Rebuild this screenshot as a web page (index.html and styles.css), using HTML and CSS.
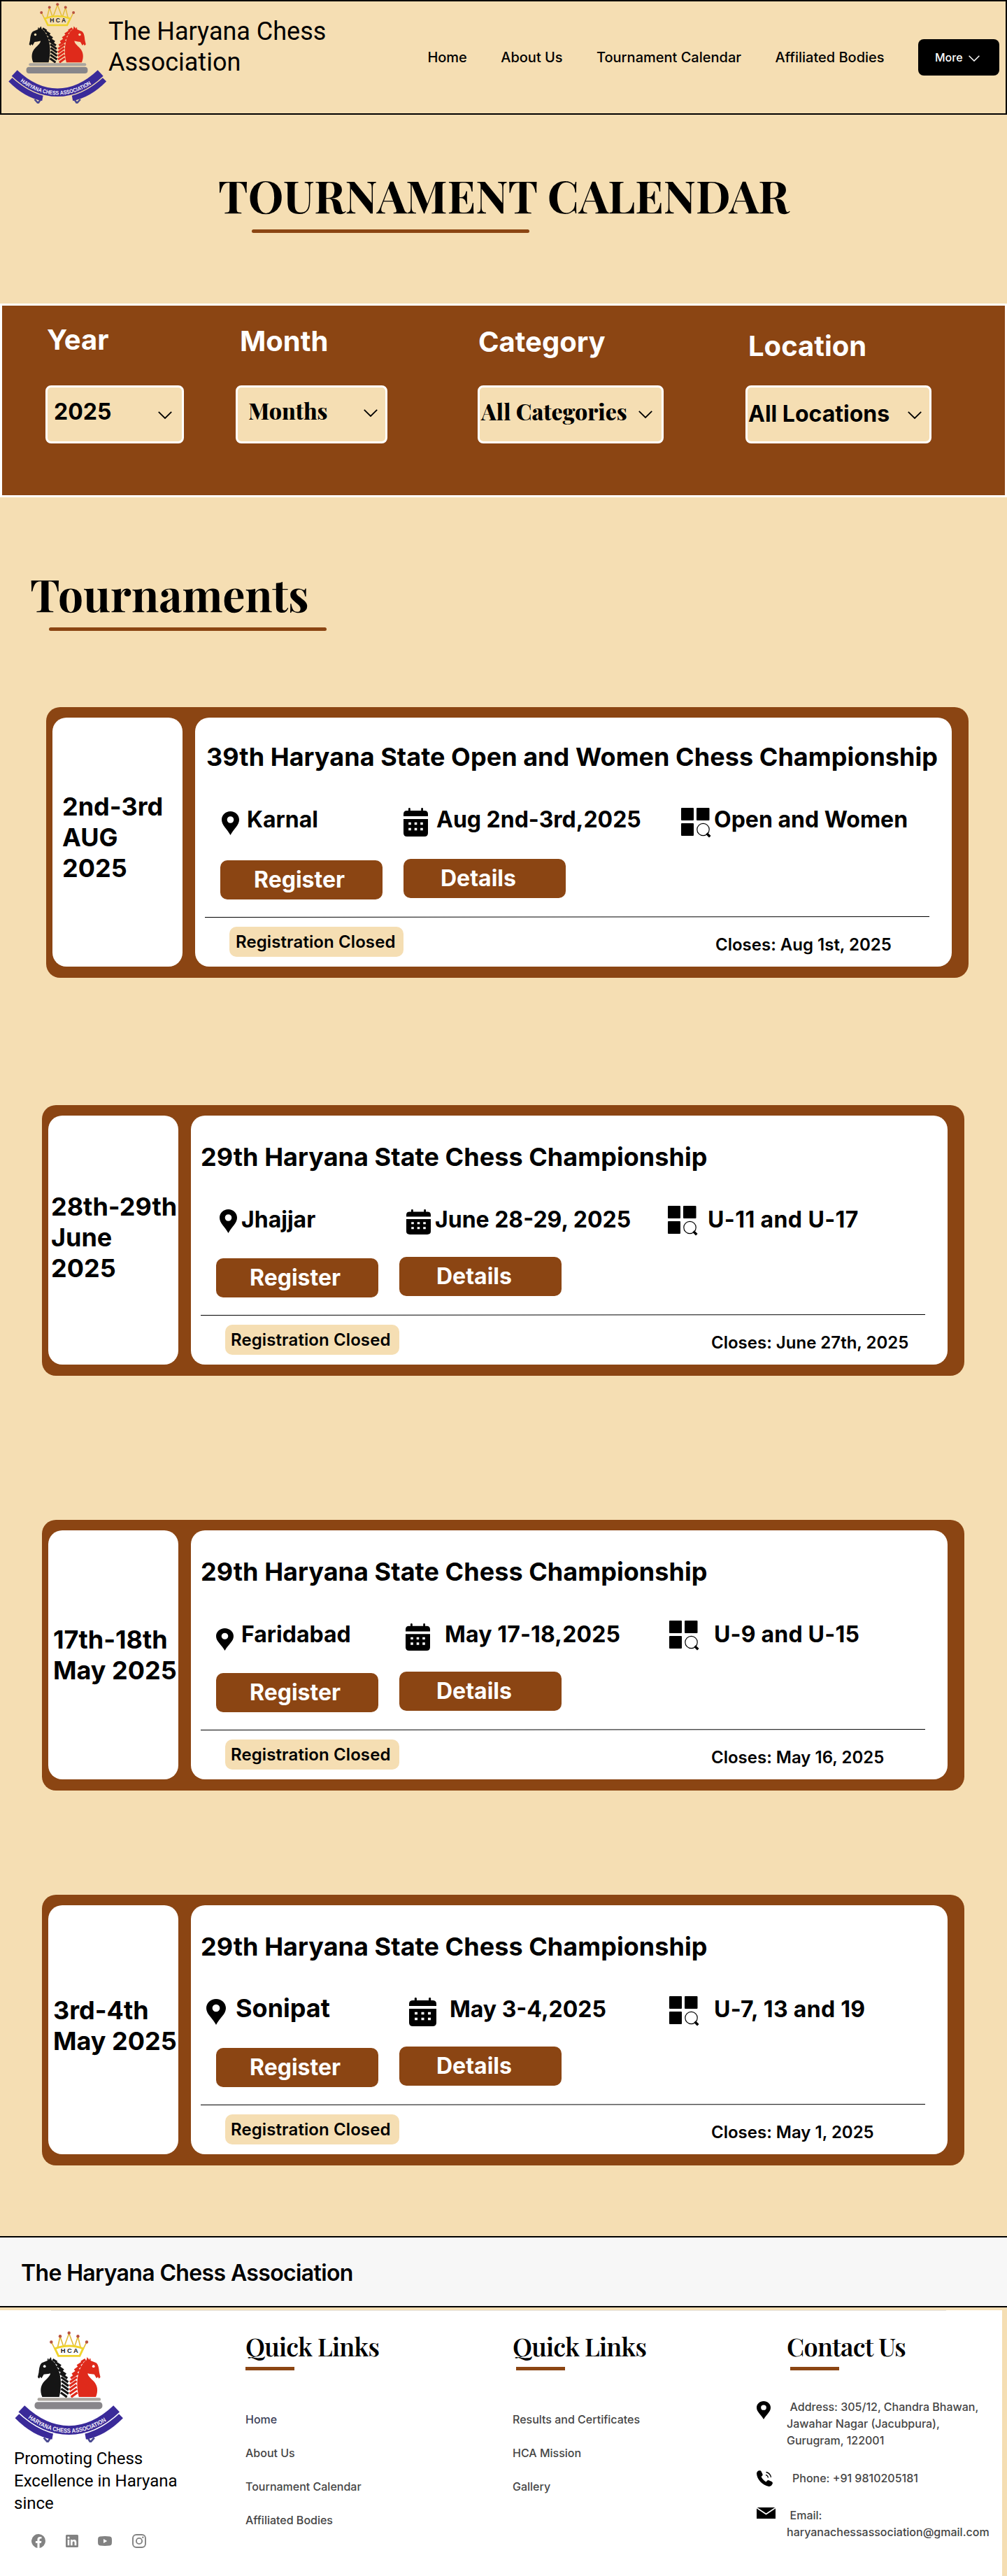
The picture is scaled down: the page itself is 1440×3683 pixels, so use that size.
FILE: index.html
```html
<!DOCTYPE html>
<html lang="en">
<head>
<meta charset="utf-8">
<title>The Haryana Chess Association - Tournament Calendar</title>
<link rel="stylesheet" href="styles.css">
</head>
<body>
<svg class="sprite" width="0" height="0" aria-hidden="true">
  <defs>
    <path id="ribbon-text-path" d="M17 112.500Q42 131.500 70.200 131.500T124 112.500"/>
    <g id="knight">
      <path d="M46.800 33.500L47.600 37.500C51 39 53.500 43.500 56 49C60 58 61 72 57.500 85.200H35.500C32 77 33.500 69.500 38.500 64.500C42.500 60.500 46 57.500 46 54.500C42.500 55.500 39.500 55.500 37.500 56L34.600 61L32.800 59L31.500 61.300L29.600 59.500L31 53.500C31.500 49 31.800 44 35 41L43.500 37.500Z"/>
      <path d="M49 36.500l5.500 3.500M52 40l7.500 5M54.500 44.500l8.500 6M56.500 49.500l9.500 6.500M58.500 54.500l9.500 6.500M60 59.500l9 6.500M60.500 64.500l9 6.500M60.500 69.500l9 6.500M60 74.500l9.500 6.500M59.500 79.500l8 5.700" fill="none" stroke="currentColor" stroke-width="2.900"/>
      <path d="M43 39.500v-4" stroke="currentColor" stroke-width="1.500"/>
      <circle class="logo-gap-fill" cx="38.500" cy="45.500" r="1.700"/>
    </g>
    <symbol id="logo" viewBox="0 0 140 144">
      <path d="M47.200 14L54 27L58.700 7L63.500 21L70.200 3L77 21L81.700 7L86.500 27L93.100 14" fill="none" stroke="#e3bd3c" stroke-width="1.500"/>
      <path class="logo-gap-fill" d="M52 22.500Q70.200 15.500 88.400 22.500L84 32H56.500Z" stroke="#f0d32c" stroke-width="2.600"/>
      <g fill="#b9523f"><circle cx="47.200" cy="14" r="2"/><circle cx="58.700" cy="6.500" r="2"/><circle cx="70.200" cy="2.300" r="2"/><circle cx="81.700" cy="6.500" r="2"/><circle cx="93.100" cy="14" r="2"/></g>
      <text class="logo-initials" x="70.700" y="28.200" text-anchor="middle">H C A</text>
      <use href="#knight" class="knight-black"/>
      <use href="#knight" class="knight-red" transform="translate(140.400 0) scale(-1 1)"/>
      <rect x="29.300" y="86.200" width="82" height="4" rx="2" fill="#aaa59e"/>
      <rect x="25.600" y="91.700" width="87.800" height="9.200" rx="4" fill="#88868a"/>
      <path d="M37.500 138l5 5.500l4-6M93.900 137.500l4 6l5-5.500" fill="none" stroke="#4a4a90" stroke-width="2.600"/>
      <g fill="none">
        <path d="M3.300 109.500Q25 131.500 49 136M137.100 109.500Q115.400 131.500 91.400 136" stroke="#3a2a99" stroke-width="8.500"/>
        <path class="logo-gap-stroke" d="M7 99.500Q38 128.800 70.200 128.800T133.400 99.500" stroke-width="13.500"/>
        <path d="M8.700 100.500Q38 128.300 70.200 128.300T131.700 100.500" stroke="#3a2a99" stroke-width="11.500"/>
      </g>
      <text class="logo-ribbon"><textPath href="#ribbon-text-path" textLength="109" lengthAdjust="spacingAndGlyphs">HARYANA CHESS ASSOCIATION</textPath></text>
    </symbol>
    <symbol id="chevron" viewBox="0 0 20 11"><path d="M.8.900L10 10L19.200.900" fill="none" stroke="currentColor" stroke-width="1.800"/></symbol>
    <symbol id="pin" viewBox="0 0 25 34" preserveAspectRatio="none"><path fill-rule="evenodd" d="M12.500 0C5.600 0 0 5.300 0 12C0 20 7.500 24.500 12.500 34C17.500 24.500 25 20 25 12C25 5.300 19.400 0 12.500 0ZM12.500 7.200A4.800 4.800 0 1 1 12.500 16.800A4.800 4.800 0 1 1 12.500 7.200Z"/></symbol>
    <symbol id="calendar" viewBox="0 0 35 41" preserveAspectRatio="none"><path fill-rule="evenodd" d="M7 4V1.200Q7 0 8.400 0T9.800 1.200V4H25.200V1.200Q25.200 0 26.600 0T28 1.200V4H30Q35 4 35 9V12H0V9Q0 4 5 4ZM0 16H35V36Q35 41 30 41H5Q0 41 0 36ZM7.200 20.700V24.300H10.800V20.700ZM15.700 20.700V24.300H19.300V20.700ZM24.200 20.700V24.300H27.800V20.700ZM7.200 28.700V32.300H10.800V28.700ZM15.700 28.700V32.300H19.300V28.700ZM24.200 28.700V32.300H27.800V28.700Z"/></symbol>
    <symbol id="category" viewBox="0 0 43 43"><rect width="18" height="18" rx="1"/><rect x="22" width="18.500" height="18" rx="1"/><rect y="22" width="18" height="18" rx="1"/><circle cx="31.500" cy="31" r="8.700" fill="none" stroke="currentColor" stroke-width="1.200"/><path d="M36.500 36.500L41.300 41.300" stroke="currentColor" stroke-width="3.600"/></symbol>
    <symbol id="rule" viewBox="0 0 1036 2"><path d="M0 1.500L1036 .5" stroke="#000" stroke-width="1"/></symbol>
  </defs>
</svg>

<header class="site-header">
  <svg class="header-logo"><use href="#logo"/></svg>
  <div class="site-name">The Haryana Chess Association</div>
  <nav class="site-nav">
    <a>Home</a><a>About Us</a><a>Tournament Calendar</a><a>Affiliated Bodies</a>
    <button class="more">More <svg><use href="#chevron"/></svg></button>
  </nav>
</header>

<main>
  <h1 class="page-title">TOURNAMENT CALENDAR</h1>
  <div class="underline underline-title"></div>

  <section class="filters">
    <div class="field year"><div class="field-label">Year</div><div class="select"><span>2025</span><svg><use href="#chevron"/></svg></div></div>
    <div class="field month"><div class="field-label">Month</div><div class="select serif"><span>Months</span><svg><use href="#chevron"/></svg></div></div>
    <div class="field category"><div class="field-label">Category</div><div class="select serif"><span>All Categories</span><svg><use href="#chevron"/></svg></div></div>
    <div class="field location"><div class="field-label">Location</div><div class="select"><span>All Locations</span><svg><use href="#chevron"/></svg></div></div>
  </section>

  <h2 class="section-title">Tournaments</h2>
  <div class="underline underline-section"></div>

  <article class="card karnal">
    <div class="card-date">2nd-3rd<br>AUG<br>2025</div>
    <div class="card-main">
      <div class="card-info">
        <h3>39th Haryana State Open and Women Chess Championship</h3>
        <div class="meta">
          <svg class="i-pin"><use href="#pin"/></svg><span>Karnal</span>
          <svg class="i-cal"><use href="#calendar"/></svg><span>Aug 2nd-3rd,2025</span>
          <svg class="i-cat"><use href="#category"/></svg><span>Open and Women</span>
        </div>
      </div>
      <div class="actions"><a class="btn register">Register</a><a class="btn details">Details</a></div>
      <svg class="rule"><use href="#rule"/></svg>
      <div class="status"><span class="badge">Registration Closed</span><span class="closes">Closes: Aug 1st, 2025</span></div>
    </div>
  </article>

  <article class="card jhajjar">
    <div class="card-date">28th-29th<br>June<br>2025</div>
    <div class="card-main">
      <div class="card-info">
        <h3>29th Haryana State Chess Championship</h3>
        <div class="meta">
          <svg class="i-pin"><use href="#pin"/></svg><span>Jhajjar</span>
          <svg class="i-cal"><use href="#calendar"/></svg><span>June 28-29, 2025</span>
          <svg class="i-cat"><use href="#category"/></svg><span class="group">U-11 and U-17</span>
        </div>
      </div>
      <div class="actions"><a class="btn register">Register</a><a class="btn details">Details</a></div>
      <svg class="rule"><use href="#rule"/></svg>
      <div class="status"><span class="badge">Registration Closed</span><span class="closes">Closes: June 27th, 2025</span></div>
    </div>
  </article>

  <article class="card faridabad">
    <div class="card-date">17th-18th<br>May 2025</div>
    <div class="card-main">
      <div class="card-info">
        <h3>29th Haryana State Chess Championship</h3>
        <div class="meta">
          <svg class="i-pin"><use href="#pin"/></svg><span>Faridabad</span>
          <svg class="i-cal"><use href="#calendar"/></svg><span class="dates">May 17-18,2025</span>
          <svg class="i-cat"><use href="#category"/></svg><span class="group">U-9 and U-15</span>
        </div>
      </div>
      <div class="actions"><a class="btn register">Register</a><a class="btn details">Details</a></div>
      <svg class="rule"><use href="#rule"/></svg>
      <div class="status"><span class="badge">Registration Closed</span><span class="closes">Closes: May 16, 2025</span></div>
    </div>
  </article>

  <article class="card sonipat">
    <div class="card-date">3rd-4th<br>May 2025</div>
    <div class="card-main">
      <div class="card-info">
        <h3>29th Haryana State Chess Championship</h3>
        <div class="meta">
          <svg class="i-pin"><use href="#pin"/></svg><span class="place">Sonipat</span>
          <svg class="i-cal"><use href="#calendar"/></svg><span>May 3-4,2025</span>
          <svg class="i-cat"><use href="#category"/></svg><span class="group">U-7, 13 and 19</span>
        </div>
      </div>
      <div class="actions"><a class="btn register">Register</a><a class="btn details">Details</a></div>
      <svg class="rule"><use href="#rule"/></svg>
      <div class="status"><span class="badge">Registration Closed</span><span class="closes">Closes: May 1, 2025</span></div>
    </div>
  </article>
</main>

<footer>
  <div class="footer-banner">The Haryana Chess Association</div>
  <div class="footer-body">
    <div class="footer-line"></div>
    <div class="footer-grid">
      <div class="brand">
        <svg class="footer-logo"><use href="#logo"/></svg>
        <p>Promoting Chess<br>Excellence in Haryana<br>since</p>
        <div class="social">
          <svg width="20" height="20" viewBox="0 0 20 20"><path d="M20 10A10 10 0 1 0 8.440 19.880V12.890H5.900V10H8.440V7.800C8.440 5.290 9.930 3.910 12.210 3.910C13.310 3.910 14.450 4.100 14.450 4.100V6.560H13.190C11.950 6.560 11.560 7.330 11.560 8.120V10H14.340L13.900 12.890H11.560V19.880A10 10 0 0 0 20 10Z"/></svg>
          <svg width="18" height="18" viewBox="0 0 18 18"><path fill-rule="evenodd" d="M1.500 0H16.500Q18 0 18 1.500V16.500Q18 18 16.500 18H1.500Q0 18 0 16.500V1.500Q0 0 1.500 0ZM2.700 7V15.300H5.300V7ZM4 2.600A1.500 1.500 0 1 0 4 5.700A1.500 1.500 0 1 0 4 2.600ZM7 7V15.300H9.600V11.200C9.600 9 12.600 8.800 12.600 11.200V15.300H15.300V10.400C15.300 6.200 11 6.200 9.600 8.200V7Z"/></svg>
          <svg width="20" height="14" viewBox="0 0 20 14"><path fill-rule="evenodd" d="M3 .4Q10-.4 17 .4Q19.500.8 19.800 3Q20.200 7 19.800 11Q19.500 13.200 17 13.600Q10 14.400 3 13.600Q.5 13.200.2 11Q-.2 7 .2 3Q.5.800 3 .400ZM8 4V10L13.200 7Z"/></svg>
          <svg width="20" height="20" viewBox="0 0 20 20"><rect x="1" y="1" width="18" height="18" rx="5" fill="none" stroke="#828282" stroke-width="1.900"/><circle cx="10" cy="10" r="4.100" fill="none" stroke="#828282" stroke-width="1.900"/><circle cx="15.300" cy="4.700" r="1.200"/></svg>
        </div>
      </div>
      <div class="links">
        <h4>Quick Links</h4><div class="bar"></div>
        <a class="current">Home</a><a>About Us</a><a>Tournament Calendar</a><a>Affiliated Bodies</a>
      </div>
      <div class="links links-more">
        <h4>Quick Links</h4><div class="bar"></div>
        <a>Results and Certificates</a><a>HCA Mission</a><a>Gallery</a>
      </div>
      <div class="contact">
        <h4>Contact Us</h4><div class="bar"></div>
        <div class="contact-row address"><svg width="20" height="26"><use href="#pin"/></svg><p>Address: 305/12, Chandra Bhawan,<br>Jawahar Nagar (Jacubpura),<br>Gurugram, 122001</p></div>
        <div class="contact-row phone"><svg width="23" height="23" viewBox="0 0 23 23"><path d="M3.500.300C5 0 6 .300 6.600 1.500L8.500 5.500Q9 7 7.600 7.900L6.600 8.700Q8 13 13.400 16.400L15 14.800Q16 13.700 17.500 14.200L21.500 16Q23.300 17 22.800 18.700C22 21 20 23.200 17.500 22.900C8 21 .5 13 0 4.500C0 2.500 1.500.800 3.500.300Z"/><path d="M13 6.300Q16 7.300 16.500 10.500M13.500 2.500Q19.500 4 20.500 10" fill="none" stroke="#000" stroke-width="1.300"/></svg><p>Phone: +91 9810205181</p></div>
        <div class="contact-row email"><svg width="27" height="16" viewBox="0 0 27 16"><path d="M0 0H27V16H0Z"/><path d="M0 .5L13.500 9.500L27 .5" fill="none" stroke="#fff" stroke-width="1.800"/></svg><p>Email:<br>haryanachessassociation@gmail.com</p></div>
      </div>
    </div>
  </div>
</footer>
</body>
</html>
```
FILE: styles.css
```css
* { box-sizing: border-box; }
body {
  margin: 0;
  width: 1440px;
  background: #f5deb3;
  color: #000;
  font-family: Inter, "Liberation Sans", sans-serif;
}
h1, h2, h3, h4, p { margin: 0; }
svg { display: block; flex: none; }
.sprite { position: absolute; }

/* Logo */
.logo-gap-fill { fill: var(--logo-gap, #f5deb3); }
.logo-gap-stroke { stroke: var(--logo-gap, #f5deb3); }
.knight-black { color: #151515; fill: #151515; }
.knight-red { color: #df2a1b; fill: #df2a1b; }
.logo-initials { font: 700 8.500px "Liberation Sans", sans-serif; fill: #222; }
.logo-ribbon { font: 700 8px "Liberation Sans", sans-serif; fill: #f4f0fa; }

/* Header */
.site-header {
  display: flex;
  height: 164px;
  padding: 2px 9px 0 10px;
  border: 2px solid #000;
}
.header-logo { width: 140px; height: 144px; }
.site-name {
  width: 330px;
  margin: 19px 0 0 3px;
  font: 400 36px/44px Roboto, sans-serif;
}
.site-nav {
  display: flex;
  align-items: center;
  gap: 48.400px;
  height: 52px;
  margin: 52px 0 0 auto;
  font-size: 20px;
  font-weight: 500;
  line-height: 30px;
  white-space: nowrap;
}
.more {
  display: flex;
  align-items: center;
  gap: 8px;
  width: 116px;
  height: 52px;
  padding: 0 0 0 24px;
  border: 0;
  border-radius: 8px;
  background: #000;
  color: #fff;
  font: 500 16px/24px Inter, sans-serif;
}
.more svg { width: 16px; height: 9px; margin-top: 2px; }

/* Titles */
.page-title, .section-title, .footer-grid h4, .serif {
  font-family: "Playfair Display", "Liberation Serif", serif;
}
.page-title {
  margin-top: 73px;
  padding-left: 312px;
  font-size: 64px;
  line-height: 84px;
  white-space: nowrap;
}
.underline { width: 397px; height: 5px; border-radius: 3px; background: #8b4513; }
.underline-title { margin: 7px 0 101px 360px; }
.section-title {
  margin-top: 96px;
  padding-left: 43px;
  font-size: 64px;
  line-height: 84px;
}
.underline-section { margin: 6px 0 109px 70px; }

/* Filters */
.filters {
  display: grid;
  grid-template-columns: 272px 346px 383px 266px;
  height: 277px;
  padding-left: 62px;
  border: 3px solid #fff;
  background: #8b4513;
}
.field-label {
  height: 114px;
  color: #fff;
  font-size: 40px;
  font-weight: 700;
  line-height: 48px;
}
.select {
  display: flex;
  align-items: flex-start;
  justify-content: space-between;
  height: 83px;
  border: 3px solid #fff;
  border-radius: 8px;
  background: #f5deb3;
  font-size: 32px;
  font-weight: 700;
  line-height: 39px;
  white-space: nowrap;
}
.select.serif { font-weight: 800; }
.select svg { width: 20px; height: 11px; }
.year .field-label { padding: 25px 0 0 2px; }
.year .select { width: 198px; padding: 15px 14px 0 9px; }
.year svg { margin-top: 19px; }
.month .field-label { padding: 27px 0 0 6px; }
.month .select { width: 217px; padding: 13px 11px 0 15px; }
.month svg { margin-top: 18px; }
.category .field-label { padding: 28px 0 0 1px; }
.category .select { width: 266px; padding: 14px 13px 0 2px; }
.category svg { margin-top: 19px; }
.location .field-label { padding: 34px 0 0 4px; }
.location .select { width: 266px; padding: 18px 11px 0 1px; }
.location svg { margin-top: 16px; }

/* Tournament cards */
.card {
  display: flex;
  gap: 18px;
  width: 1319px;
  height: 387px;
  margin-left: 60px;
  padding: 15px 24px 16px 9px;
  border-radius: 20px;
  background: #8b4513;
  font-weight: 700;
  white-space: nowrap;
}
.card-date, .card-main { border-radius: 20px; background: #fff; }
.card-date { width: 186px; flex: none; font-size: 36px; line-height: 44px; }
.card-main { width: 1082px; height: 356px; }
.card-info { height: 202px; padding-top: 37px; }
.card h3 { padding-left: 14px; font-size: 36px; line-height: 44px; letter-spacing: .05px; }
.meta {
  display: grid;
  align-items: start;
  margin-top: 47.500px;
  font-size: 32px;
  line-height: 39px;
}
.i-pin { width: 25px; height: 34px; margin-top: 5px; }
.i-cal { width: 35px; height: 41px; margin-top: 3px; }
.i-cat { width: 43px; height: 43px; }
.actions { display: flex; gap: 30px; height: 58px; padding-left: 36px; }
.btn {
  width: 232px;
  height: 56px;
  border-radius: 10px;
  background: #8b4513;
  color: #fff;
  font-size: 32px;
  line-height: 56px;
}
.register { margin-top: 2px; padding-left: 48px; }
.details { padding-left: 53px; }
.rule { width: 1036px; height: 2px; margin: 24px 0 0 14px; }
.status {
  display: flex;
  margin-top: 13px;
  padding-left: 49px;
  font-size: 24px;
  font-weight: 600;
  line-height: 43px;
}
.badge {
  width: 249px;
  height: 43px;
  padding-left: 8px;
  border-radius: 10px;
  background: #f5deb3;
  letter-spacing: .1px;
}
.closes { margin: 4px 0 0 446px; }

.karnal { margin-left: 66px; margin-bottom: 182px; }
.karnal .card-date { padding: 105px 0 0 14px; }
.karnal .card-info { padding-top: 34px; }
.karnal h3 { padding-left: 16px; }
.karnal .meta { padding-left: 38px; grid-template-columns: 36px 224px 47px 350px 47px auto; }
.karnal .i-pin { margin-top: 8px; }
.karnal .i-cat { margin-top: 3px; }
.karnal .badge { padding-left: 9px; }

.jhajjar { margin-bottom: 206px; }
.jhajjar .card-date { padding: 108px 0 0 4px; }
.jhajjar .meta { padding-left: 41px; grid-template-columns: 31px 236px 41px 333px 57px auto; }
.jhajjar .i-cal { height: 36px; margin-top: 5px; }
.jhajjar .group { letter-spacing: .4px; }

.faridabad { margin-bottom: 149px; }
.faridabad .card-date { padding: 134px 0 0 7px; }
.faridabad .meta { padding-left: 36px; grid-template-columns: 36px 235px 56px 321px 64px auto; }
.faridabad .i-pin { height: 32px; margin-top: 11px; }
.faridabad .i-cal { height: 39px; margin-top: 4px; }
.faridabad .dates { letter-spacing: .15px; }
.faridabad .group { letter-spacing: .2px; }

.sonipat { margin-bottom: 101px; }
.sonipat .card-date { padding: 128px 0 0 7px; }
.sonipat .meta { padding-left: 22px; grid-template-columns: 42px 248px 58px 314px 64px auto; }
.sonipat .place { margin-top: -1px; font-size: 36px; }
.sonipat .i-pin { width: 28px; height: 37px; }
.sonipat .i-cal { width: 39px; }
.sonipat .i-cat { margin-top: 1px; }
.sonipat .group { letter-spacing: .3px; }

/* Footer */
.footer-banner {
  height: 102px;
  padding: 32px 0 0 30px;
  border: solid #000;
  border-width: 2px 0;
  background: #f7f7f7;
  font-size: 32px;
  font-weight: 600;
  line-height: 38px;
  letter-spacing: -.64px;
}
.footer-body {
  --logo-gap: #fff;
  width: 1433px;
  height: 380px;
  margin-top: 4px;
  background: #fff;
}
.footer-line { width: 1280px; height: 1px; margin-left: 73px; background: #e6e6e6; }
.footer-grid {
  display: grid;
  grid-template-columns: 331px 382px 349px 351px;
  padding: 28px 0 0 20px;
  color: #454545;
  font-size: 16px;
  font-weight: 500;
  line-height: 24px;
  white-space: nowrap;
}
.footer-logo { width: 155px; height: 159px; margin: 1px 0 7px 1px; }
.brand p { color: #000; font: 400 24px/32px Roboto, sans-serif; }
.social {
  display: flex;
  align-items: center;
  gap: 28.500px;
  margin: 28px 0 0 25px;
  fill: #828282;
}
.footer-grid h4 {
  height: 48px;
  color: #000;
  font-size: 36px;
  font-weight: 600;
  line-height: 44px;
  letter-spacing: -.720px;
}
.bar { width: 70px; height: 5px; margin-top: 4px; background: #8b4513; }
.links { display: flex; flex-direction: column; gap: 24px; }
.links .bar { margin: -20px 0 34px; }
.links .current { color: #3c4058; }
.links-more .bar { margin-left: 5px; }
.contact h4 { padding-left: 43px; }
.contact .bar { margin-left: 48px; }
.contact-row { display: grid; grid-template-columns: 43px auto; fill: #000; }
.contact-row p { text-indent: 4.600px; }
.address { margin-top: 40px; }
.address svg { margin-top: 4px; }
.phone { margin-top: 30px; }
.phone svg { margin-top: 1px; }
.phone p { text-indent: 8px; }
.email { margin-top: 29px; }
.email svg { margin-top: 1px; }
```
